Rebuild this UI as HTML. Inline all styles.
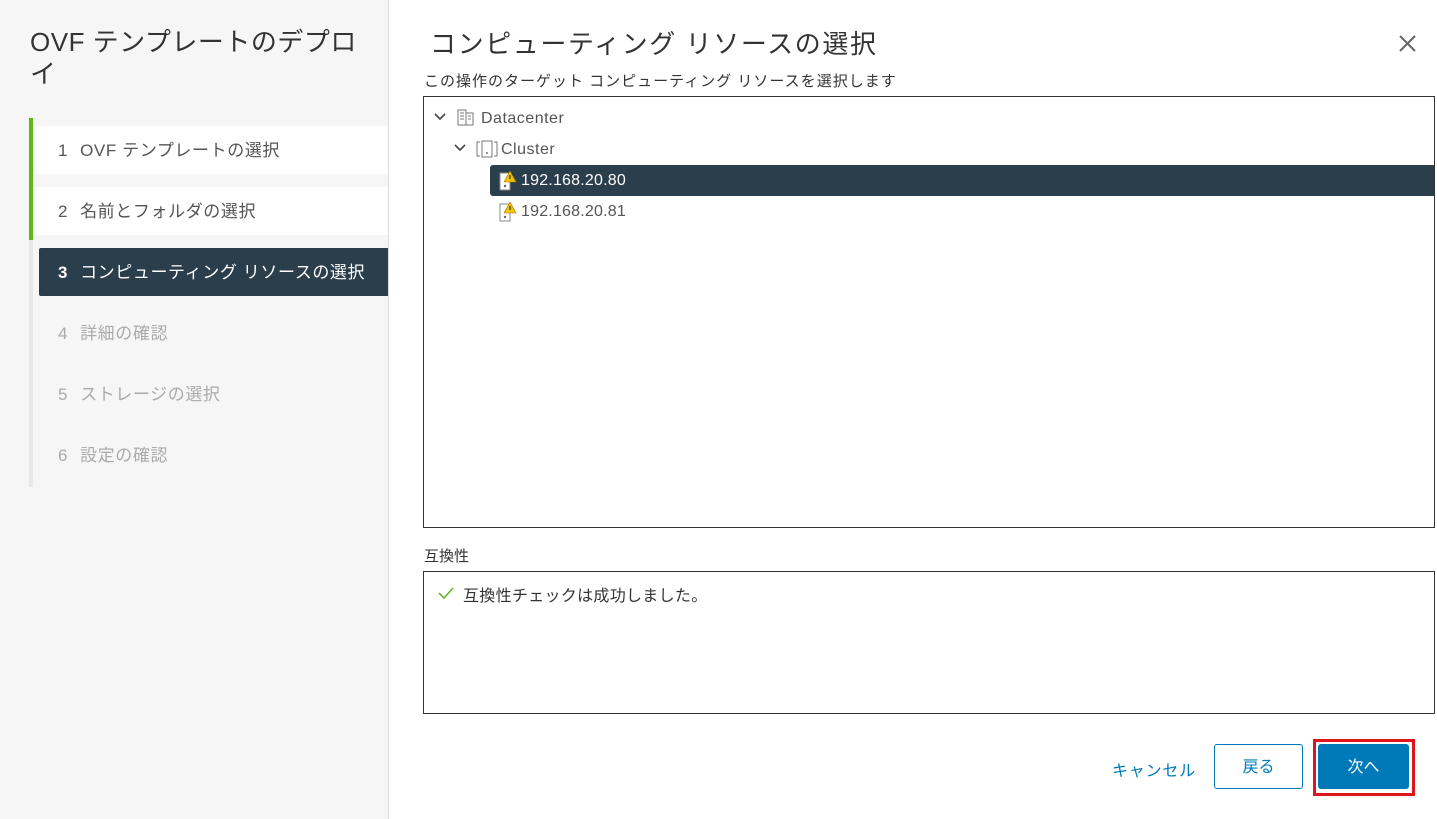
<!DOCTYPE html><html><head><meta charset="utf-8"><style>
body{margin:0;width:1437px;height:819px;background:#fff;font-family:"Liberation Sans","Noto Sans CJK JP",sans-serif;position:relative;overflow:hidden;color:#333}
.a{position:absolute;white-space:nowrap}
.left{left:0;top:0;width:388px;height:819px;background:#f6f6f6;border-right:1px solid #ddd}
.step{position:absolute;left:33px;width:355px;height:48px;line-height:50px;font-size:17px;letter-spacing:0.6px;color:#555;padding-left:25px;box-sizing:border-box;white-space:nowrap;overflow:hidden}
.step b{font-weight:normal;margin-right:12px}
</style></head><body>
<div class="a left"></div>
<div class="a" style="left:30px;top:26px;font-size:26px;line-height:32px;color:#333;width:345px;white-space:normal;letter-spacing:0.5px">OVF テンプレートのデプロイ</div>
<div class="a" style="left:29px;top:118px;width:4px;height:369px;background:#e8e8e8"></div>
<div class="a" style="left:29px;top:118px;width:4px;height:122px;background:#5eb715"></div>
<div class="step" style="top:126px;background:#fff"><b>1</b>OVF テンプレートの選択</div>
<div class="step" style="top:187px;background:#fff"><b>2</b>名前とフォルダの選択</div>
<div class="step" style="top:248px;left:39px;width:349px;background:#2b3e4c;color:#fff;padding-left:19px;border-radius:2px 0 0 2px"><b style="font-weight:bold">3</b>コンピューティング リソースの選択</div>
<div class="step" style="top:309px;color:#aaa"><b>4</b>詳細の確認</div>
<div class="step" style="top:370px;color:#aaa"><b>5</b>ストレージの選択</div>
<div class="step" style="top:431px;color:#aaa"><b>6</b>設定の確認</div>

<div class="a" style="left:430px;top:24px;font-size:26px;letter-spacing:1.6px;color:#333">コンピューティング リソースの選択</div>
<svg class="a" style="left:1399px;top:35px" width="17" height="17"><path d="M1 1L16 16M16 1L1 16" stroke="#666" stroke-width="2"/></svg>
<div class="a" style="left:424px;top:70px;font-size:15px;letter-spacing:1px;color:#333">この操作のターゲット コンピューティング リソースを選択します</div>
<div class="a" style="left:423px;top:96px;width:1010px;height:430px;border:1px solid #333"></div>
<svg class="a" style="left:433px;top:111px" width="14" height="12"><path d="M2 3L7 8L12 3" stroke="#444" stroke-width="1.6" fill="none"/></svg>
<svg class="a" style="left:457px;top:109px" width="18" height="17"><rect x="1" y="1" width="8" height="15" fill="none" stroke="#777"/><rect x="9" y="4" width="7" height="12" fill="none" stroke="#777"/><path d="M3 4h4M3 7h4M3 10h4M11 7h3M11 10h3" stroke="#777"/></svg>
<div class="a" style="left:481px;top:110px;font-size:16px;letter-spacing:0.5px;color:#555">Datacenter</div>
<svg class="a" style="left:453px;top:142px" width="14" height="12"><path d="M2 3L7 8L12 3" stroke="#444" stroke-width="1.6" fill="none"/></svg>
<svg class="a" style="left:476px;top:140px" width="22" height="18"><path d="M4 2H1V16H4M18 2H21V16H18" stroke="#777" fill="none"/><rect x="6" y="1" width="10" height="16" fill="none" stroke="#777"/><circle cx="11" cy="13" r="1" fill="#777"/></svg>
<div class="a" style="left:501px;top:141px;font-size:16px;letter-spacing:0.5px;color:#555">Cluster</div>
<div class="a" style="left:490px;top:165px;width:944px;height:31px;background:#2b3e4c;border-radius:3px 0 0 3px"></div>
<svg class="a" style="left:499px;top:170px" width="18" height="21"><rect x="1" y="3" width="10" height="17" fill="#fff" stroke="#888"/><circle cx="6" cy="16" r="1.2" fill="#666"/><path d="M11 1L17 12H5Z" fill="#f5c400" stroke="#a07800" stroke-width=".6"/><path d="M11 5v4" stroke="#333" stroke-width="1.3"/></svg>
<div class="a" style="left:521px;top:172px;font-size:16px;letter-spacing:0.2px;color:#fff">192.168.20.80</div>
<svg class="a" style="left:499px;top:201px" width="18" height="21"><rect x="1" y="3" width="10" height="17" fill="#fff" stroke="#888"/><circle cx="6" cy="16" r="1.2" fill="#666"/><path d="M11 1L17 12H5Z" fill="#f5c400" stroke="#a07800" stroke-width=".6"/><path d="M11 5v4" stroke="#333" stroke-width="1.3"/></svg>
<div class="a" style="left:521px;top:203px;font-size:16px;letter-spacing:0.2px;color:#555">192.168.20.81</div>

<div class="a" style="left:424px;top:545px;font-size:15px;color:#333">互換性</div>
<div class="a" style="left:423px;top:571px;width:1010px;height:141px;border:1px solid #333"></div>
<svg class="a" style="left:437px;top:585px" width="18" height="16"><path d="M2 8L7 13L16 3" stroke="#5eb715" stroke-width="1.5" fill="none"/></svg>
<div class="a" style="left:463px;top:582px;font-size:16px;letter-spacing:0.3px;color:#333">互換性チェックは成功しました。</div>

<div class="a" style="left:1112px;top:757px;font-size:16px;letter-spacing:0.8px;color:#0079b8">キャンセル</div>
<div class="a" style="left:1214px;top:744px;width:87px;height:43px;border:1px solid #0079b8;border-radius:3px;text-align:center;line-height:45px;font-size:16px;color:#0079b8">戻る</div>
<div class="a" style="left:1313px;top:739px;width:96px;height:51px;border:3px solid #e0141e"></div>
<div class="a" style="left:1318px;top:744px;width:91px;height:45px;background:#0079b8;border-radius:3px;text-align:center;line-height:47px;font-size:16px;color:#fff">次へ</div>
</body></html>
